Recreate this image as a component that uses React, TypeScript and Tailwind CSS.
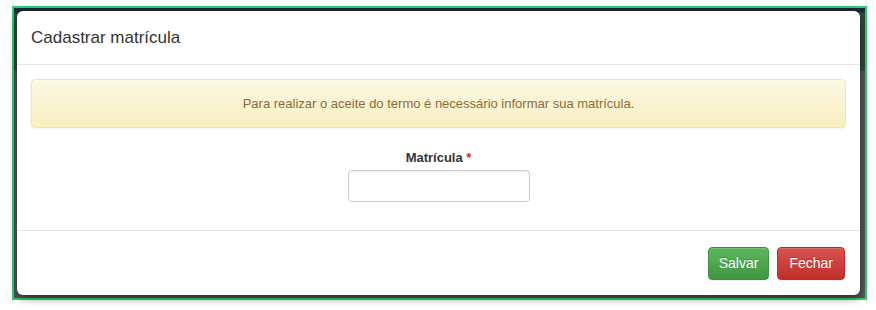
import React from 'react';

const App: React.FC = () => {
    return (
        <div className="w-[876px] h-[310px] bg-white pt-[6px] pl-[12px] font-['Liberation_Sans',Arial,sans-serif]">
            {/* page behind the modal, dimmed by the backdrop */}
            <div className="w-[855px] h-[294px] border-2 border-[#2fcf6f] pt-[3px] pl-[3px] pr-[5px] bg-[linear-gradient(to_bottom,#1c2b3d_0px,#1c2b3d_4px,#2f4a3a_5px,#2f4a3a_62px,#575757_63px,#575757_100%)]">
                <div className="w-[843px] h-[284px] bg-white rounded-[6px] shadow-[0_3px_9px_rgba(0,0,0,0.5)] flex flex-col text-[#333]">
                    <div className="h-[54px] border-b border-[#e5e5e5] px-[14px] flex items-center">
                        <h4 className="text-[17px] leading-[26px] pt-[1px]">Cadastrar matrícula</h4>
                    </div>

                    <div className="h-[166px] px-[14px] pt-[14px] border-b border-[#e5e5e5]">
                        <div className="h-[49px] rounded-[4px] border border-[#f5e79e] bg-[linear-gradient(to_bottom,#fcf8e3_0%,#f8efc0_100%)] shadow-[inset_0_1px_0_rgba(255,255,255,0.25),0_1px_2px_rgba(0,0,0,0.05)] flex items-center justify-center text-[13px] text-[#8a6d3b]">
                            Para realizar o aceite do termo é necessário informar sua matrícula.
                        </div>

                        <div className="mt-[20px] flex flex-col items-center">
                            <label className="text-[13px] leading-[20px] font-bold mb-[2px]">
                                Matrícula <span className="text-[#e02222]">*</span>
                            </label>
                            <input
                                type="text"
                                className="w-[182px] h-[32px] rounded-[4px] border border-[#ccc] shadow-[inset_0_1px_1px_rgba(0,0,0,0.075)] outline-none px-3 text-[14px]"
                            />
                        </div>
                    </div>

                    <div className="flex-1 flex justify-end items-start pt-[16px] pr-[15px] gap-[8px]">
                        <button className="h-[33px] px-[10px] rounded-[4px] border border-[#3e8f3e] text-white text-[14px] bg-[linear-gradient(to_bottom,#5cb85c_0%,#419641_100%)] shadow-[inset_0_1px_0_rgba(255,255,255,0.15),0_1px_1px_rgba(0,0,0,0.075)] [text-shadow:0_-1px_0_rgba(0,0,0,0.2)]">
                            Salvar
                        </button>
                        <button className="h-[33px] px-[11px] rounded-[4px] border border-[#b92c28] text-white text-[14px] bg-[linear-gradient(to_bottom,#d9534f_0%,#c12e2a_100%)] shadow-[inset_0_1px_0_rgba(255,255,255,0.15),0_1px_1px_rgba(0,0,0,0.075)] [text-shadow:0_-1px_0_rgba(0,0,0,0.2)]">
                            Fechar
                        </button>
                    </div>
                </div>
            </div>
        </div>
    );
};

export default App;
